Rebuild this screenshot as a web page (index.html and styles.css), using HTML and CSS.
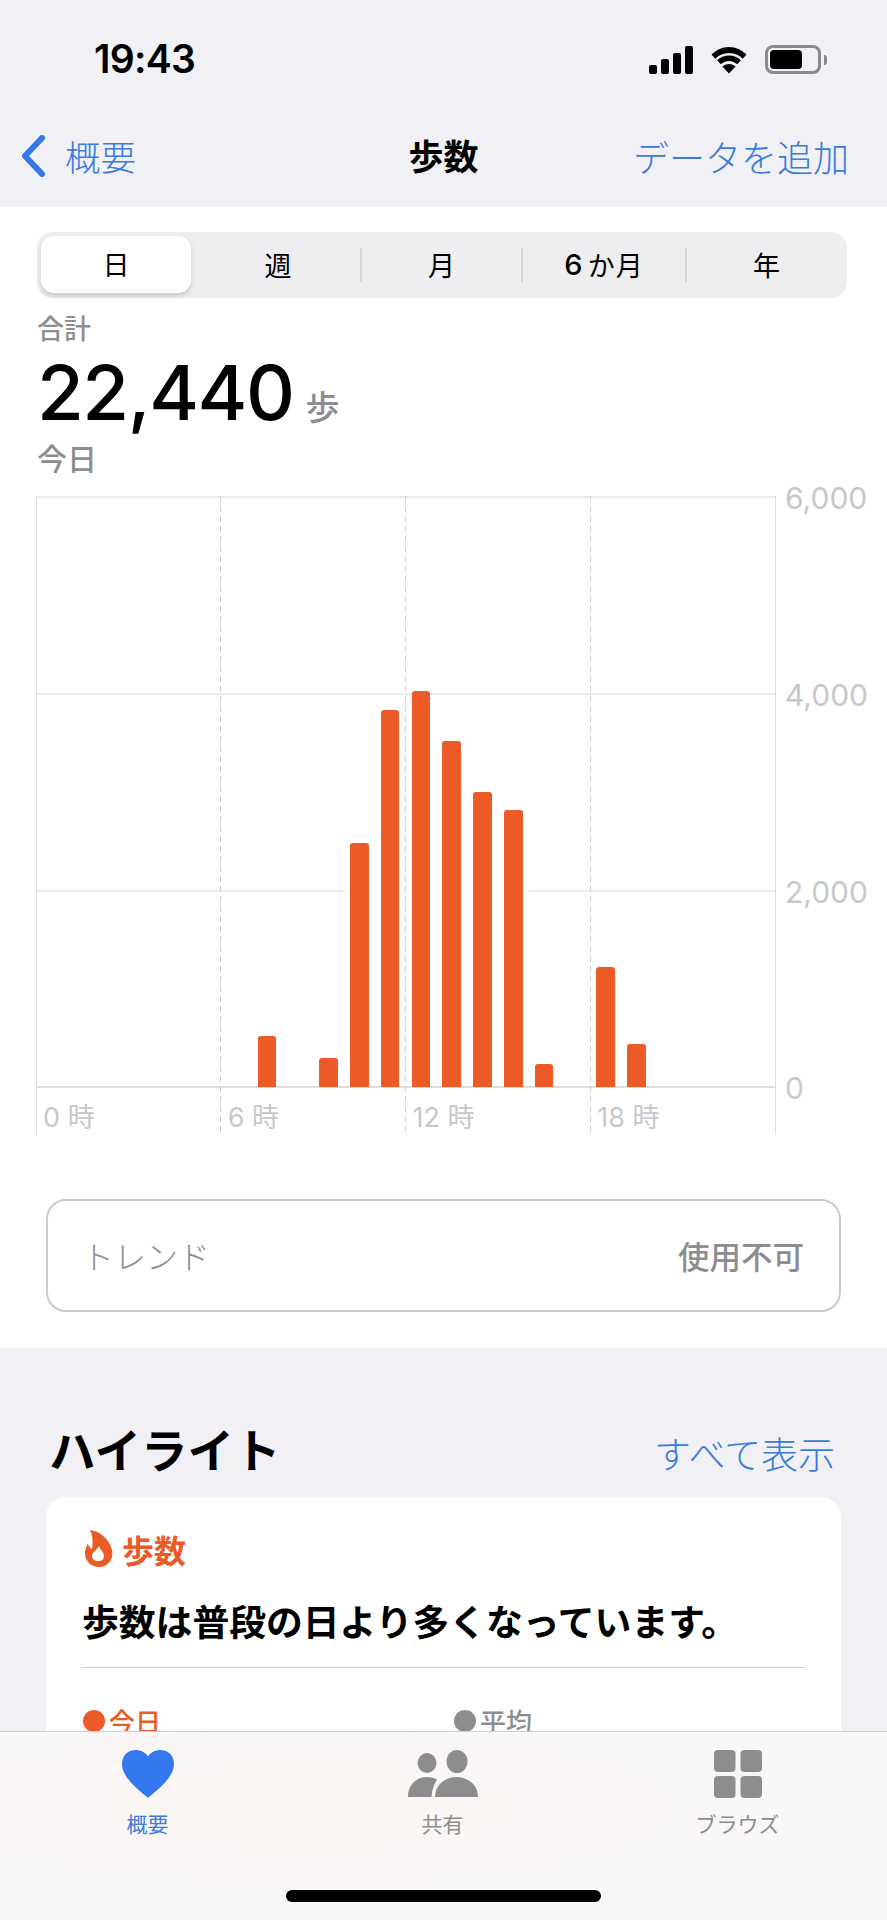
FILE: index.html
```html
<!DOCTYPE html>
<html lang="ja">
<head>
<meta charset="utf-8">
<title>歩数</title>
<link rel="stylesheet" href="styles.css">
</head>
<body>
<div class="phone">
  <header class="top">
    <div class="status">
      <span class="time">19:43</span>
      <div class="status-icons">
        <svg class="signal" viewBox="0 0 44 28"><rect x="0" y="19" width="8" height="9" rx="2"/><rect x="12" y="13" width="8" height="15" rx="2"/><rect x="24" y="7" width="8" height="21" rx="2"/><rect x="36" y="0" width="8" height="28" rx="2"/></svg>
        <svg class="wifi" viewBox="0 0 38 28"><path d="M19 7c5.400 0 10.200 2.200 13.700 5.700l3.800-4.100C32 4 25.800 1 19 1S6 4 1.500 8.600l3.800 4.100C8.800 9.200 13.600 7 19 7z"/><path d="M19 15c3.200 0 6 1.300 8.200 3.300l3.700-4C27.800 11.300 23.600 9.500 19 9.500S10.200 11.300 7.100 14.300l3.700 4c2.200-2 5-3.300 8.200-3.300z"/><path d="M19 27.500l6.600-7.100c-1.700-1.500-4-2.400-6.600-2.400s-4.900.9-6.600 2.400z"/></svg>
        <div class="battery"><div class="battery-body"><div class="battery-fill"></div></div><div class="battery-cap"></div></div>
      </div>
    </div>
    <nav class="navbar">
      <a class="back">
        <svg class="chevron" viewBox="0 0 26 42"><path d="M22 3L5 21l17 18" fill="none" stroke="#3478e8" stroke-width="6" stroke-linecap="round" stroke-linejoin="round"/></svg>
        <span>概要</span>
      </a>
      <h1 class="nav-title">歩数</h1>
      <a class="nav-action">データを追加</a>
    </nav>
  </header>

  <section class="detail">
    <div class="segments">
      <div class="seg seg-on">日</div>
      <div class="seg seg-week">週</div>
      <div class="seg seg-line">月</div>
      <div class="seg seg-line seg-half"><span class="seg-six">6</span>か月</div>
      <div class="seg seg-line seg-year">年</div>
    </div>
    <div class="summary">
      <div class="sum-label">合計</div>
      <div class="sum-value"><span class="sum-num">22,440</span><span class="sum-unit">歩</span></div>
      <div class="sum-date">今日</div>
    </div>
    <div class="chart">
      <div class="plot">
        <i class="hline hl-0"></i><i class="hline hl-1"></i><i class="hline hl-2"></i><i class="hline hl-3"></i>
        <i class="vline vl-0"></i><i class="vline vl-1 dash"></i><i class="vline vl-2 dash"></i><i class="vline vl-3 dash"></i><i class="vline vl-4"></i>
        <div class="bars">
          <div class="slot"></div><div class="slot"></div><div class="slot"></div><div class="slot"></div><div class="slot"></div><div class="slot"></div><div class="slot"></div>
          <div class="slot"><div class="bar" style="height:51px"></div></div>
          <div class="slot"></div>
          <div class="slot"><div class="bar" style="height:29px"></div></div>
          <div class="slot"><div class="bar" style="height:244px"></div></div>
          <div class="slot"><div class="bar" style="height:377px"></div></div>
          <div class="slot"><div class="bar" style="height:396px"></div></div>
          <div class="slot"><div class="bar" style="height:346px"></div></div>
          <div class="slot"><div class="bar" style="height:295px"></div></div>
          <div class="slot"><div class="bar" style="height:277px"></div></div>
          <div class="slot"><div class="bar" style="height:23px"></div></div>
          <div class="slot"></div>
          <div class="slot"><div class="bar" style="height:120px"></div></div>
          <div class="slot"><div class="bar" style="height:43px"></div></div>
          <div class="slot"></div><div class="slot"></div><div class="slot"></div><div class="slot"></div>
        </div>
        <div class="xlabels"><span>0 時</span><span>6 時</span><span>12 時</span><span>18 時</span></div>
      </div>
      <div class="ylabels"><span>6,000</span><span>4,000</span><span>2,000</span><span>0</span></div>
    </div>
    <div class="trend"><span class="trend-name">トレンド</span><span class="trend-value">使用不可</span></div>
  </section>

  <section class="highlights">
    <div class="hl-head"><h2>ハイライト</h2><a>すべて表示</a></div>
    <article class="card">
      <div class="card-tag">
        <svg class="flame" viewBox="0 0 28 37"><path fill-rule="evenodd" d="M5 0C14 1 24 8 27 20 29 29 23 37 14 37 6 37 0 31 0 23 0 19 2 15 3 14 4 17 5 18 7 19 8 13 8 6 5 0zM14 16C15 20 19 22 19 26 19 29 17 31 13 31 9 31 7 29 7 26 7 22 12 20 14 16z"/></svg>
        <span>歩数</span>
      </div>
      <p class="card-text">歩数は普段の日より多くなっています。</p>
      <div class="card-rule"></div>
      <div class="legend">
        <div class="leg leg-today"><i class="dot"></i>今日</div>
        <div class="leg leg-avg"><i class="dot"></i>平均</div>
      </div>
    </article>
  </section>

  <footer class="tabbar">
    <div class="tabs">
      <div class="tab tab-on">
        <svg class="tab-icon" width="52" height="48" viewBox="0 0 52 48"><path d="M26 48C24 45 0 30 0 14 0 5.500 6 0 13.500 0 19 0 23.500 2.500 26 6.500 28.500 2.500 33 0 38.500 0 46 0 52 5.500 52 14c0 16-24 31-26 34z"/></svg>
        <span>概要</span>
      </div>
      <div class="tab">
        <svg class="tab-icon" width="71" height="48" viewBox="0 0 71 48"><ellipse cx="20" cy="13" rx="9.500" ry="10"/><ellipse cx="50" cy="11.500" rx="10.500" ry="11.500"/><path d="M1 47C1 35 9 27 20 27 24 27 27 28 30 29.500 27 34 25 40 24.500 47z"/><path d="M28 47C28 35 38 27 49.500 27 61 27 71 35 71 47z"/></svg>
        <span>共有</span>
      </div>
      <div class="tab">
        <svg class="tab-icon" width="48" height="48" viewBox="0 0 48 48"><rect width="21.500" height="22" rx="4"/><rect x="26.500" width="21.500" height="22" rx="4"/><rect y="26" width="21.500" height="22" rx="4"/><rect x="26.500" y="26" width="21.500" height="22" rx="4"/></svg>
        <span>ブラウズ</span>
      </div>
    </div>
    <div class="home"></div>
  </footer>
</div>
</body>
</html>
```
FILE: styles.css
```css
* { box-sizing: border-box; }
html, body { margin: 0; padding: 0; }
body {
  width: 887px;
  height: 1920px;
  overflow: hidden;
  background: #f0f0f5;
  font-family: "Noto Sans CJK JP", "Inter", sans-serif;
  color: #000;
}
a { color: #3a7bdc; }
.phone { position: relative; width: 887px; height: 1920px; overflow: hidden; }

/* header */
.top { height: 207px; background: #f0f0f5; }
.status { height: 118px; padding: 45px 60px 0 94px; display: flex; justify-content: space-between; align-items: flex-start; }
.time { font: 600 39px/28px "Inter", sans-serif; letter-spacing: -0.7px; }
.status-icons { display: flex; align-items: center; gap: 17px; }
.signal { width: 44px; height: 28px; }
.wifi { width: 38px; height: 28px; }
.battery { display: flex; align-items: center; gap: 3px; }
.battery-body { width: 56px; height: 29px; border: 3px solid #8a8a8e; border-radius: 8px; padding: 2px; }
.battery-fill { width: 32px; height: 100%; background: #000; border-radius: 4px; }
.battery-cap { width: 3px; height: 10px; background: #8a8a8e; border-radius: 0 3px 3px 0; }

.navbar { display: flex; align-items: center; justify-content: space-between; padding: 0 38px 2px 20px; height: 78px; position: relative; }
.back { display: flex; align-items: center; gap: 19px; font-size: 35.500px; line-height: 44px; font-weight: 300; }
.chevron { width: 26px; height: 42px; }
.nav-title { position: absolute; left: 0; right: 0; top: 15px; margin: 0; text-align: center; font-size: 35px; line-height: 44px; font-weight: 700; }
.nav-action { font-size: 36px; line-height: 44px; font-weight: 300; }

/* detail */
.detail { background: #fff; height: 1141px; padding: 25px 40px 0 37px; }
.segments { display: flex; height: 66px; background: #eeeef0; border-radius: 16px; padding: 4px; }
.seg { flex: 0 0 161px; display: flex; align-items: center; justify-content: center; padding-bottom: 2px; font-size: 27px; font-weight: 400; position: relative; }
.seg-on { flex: 0 0 150px; height: 57px; background: #fff; border-radius: 13px; box-shadow: 0 3px 5px rgba(0,0,0,.16); }
.seg-week { flex-basis: 170px; padding-left: 4px; }
.seg-half { flex-basis: 164px; letter-spacing: 1px; }
.seg-six { font-family: "Inter", sans-serif; font-weight: 500; font-size: 29px; margin-right: 4px; }
.seg-year { flex: 1; padding-left: 4px; }
.seg-line::before { content: ""; position: absolute; left: -1px; top: 12px; bottom: 12px; width: 2px; background: #d6d6d9; }

.summary { padding-top: 13px; }
.sum-label { font-size: 27px; line-height: 34px; font-weight: 500; color: #8d8d90; }
.sum-value { display: flex; align-items: baseline; height: 84px; margin-top: 5px; }
.sum-num { font: 500 76px/84px "Inter", sans-serif; letter-spacing: -1.500px; }
.sum-unit { font-size: 34px; font-weight: 500; color: #8d8d90; margin-left: 12px; }
.sum-date { font-size: 30px; line-height: 40px; font-weight: 500; color: #8d8d90; margin-top: 3px; }

.chart { display: flex; margin: 19px 0 0 -1px; }
.plot { position: relative; width: 739px; height: 638px; }
.hline { position: absolute; left: 0; right: 0; height: 2px; background: #ebebed; }
.hl-0 { top: 0; }
.hl-1 { top: 197px; }
.hl-2 { top: 394px; background: linear-gradient(to right, #ebebed 0 309px, transparent 309px 493px, #ebebed 493px); }
.hl-3 { top: 590px; background: #dedee0; }
.vline { position: absolute; top: 0; bottom: 0; width: 1px; background: #dcdcde; }
.vl-0 { left: 0; }
.vl-1 { left: 184px; }
.vl-2 { left: 369px; }
.vl-3 { left: 554px; }
.vl-4 { left: 739px; }
.dash { background: repeating-linear-gradient(to bottom, #d0d0d4 0 6px, transparent 6px 10px); }
.bars { position: absolute; left: 0; top: 0; width: 739px; height: 591px; display: grid; grid-template-columns: repeat(24, 1fr); }
.slot { display: flex; align-items: flex-end; justify-content: center; }
.bar { width: 18.500px; background: #ec5a27; border-radius: 3px 3px 0 0; position: relative; }
.xlabels { position: absolute; left: 0; top: 591px; width: 739px; display: grid; grid-template-columns: repeat(4, 1fr); padding-top: 14px; }
.xlabels span { padding-left: 7px; font-family: "Inter", "Noto Sans CJK JP", sans-serif; font-size: 27px; line-height: 34px; color: #c7c7cc; }
.ylabels { position: relative; flex: 1; height: 591px; }
.ylabels span { position: absolute; left: 10px; font: 400 30px/30px "Inter", sans-serif; color: #c7c7cc; transform: translateY(-50%); }
.ylabels span:nth-child(1) { top: 2px; }
.ylabels span:nth-child(2) { top: 199px; }
.ylabels span:nth-child(3) { top: 396px; }
.ylabels span:nth-child(4) { top: 592px; }

.trend { margin: 65px 0 0 9px; width: 795px; height: 113px; border: 2px solid #cbcbce; border-radius: 20px; display: flex; justify-content: space-between; align-items: center; padding: 0 35px 2px 34px; font-size: 32px; color: #8d8d90; }
.trend-name { font-weight: 300; }
.trend-value { font-size: 31.500px; font-weight: 500; }

/* highlights */
.highlights { padding: 0 46px; }
.hl-head { height: 149px; display: flex; justify-content: space-between; align-items: flex-start; padding: 70px 6px 0 3px; }
.hl-head h2 { margin: 0; font-size: 46.500px; line-height: 60px; font-weight: 700; }
.hl-head a { font-size: 37px; line-height: 60px; font-weight: 300; padding-top: 5px; }
.card { background: #fff; border-radius: 20px; height: 400px; padding: 33px 36px 0; }
.card-tag { display: flex; align-items: center; gap: 9px; height: 37px; font-size: 32px; font-weight: 700; color: #ec5a27; }
.flame { width: 28px; height: 37px; flex: none; margin-left: 3px; fill: #ec5a27; }
.card-text { margin: 29px 0 0; font-size: 36.800px; line-height: 48px; font-weight: 700; }
.card-rule { height: 1px; background: #d0d0d3; margin-top: 23px; }
.legend { display: grid; grid-template-columns: 371px 1fr; margin-top: 35px; padding-left: 1px; }
.leg { display: flex; align-items: center; gap: 4px; font-size: 26px; line-height: 36px; font-weight: 500; }
.dot { width: 22px; height: 22px; border-radius: 50%; background: currentColor; }
.leg-today { color: #ec5a27; }
.leg-avg { color: #8d8d90; }

/* tab bar */
.tabbar { position: absolute; left: 0; right: 0; top: 1731px; bottom: 0; background: radial-gradient(ellipse at 35% 40%, #faf6f4, #f8f7f7 75%); border-top: 1px solid #cfcfd1; }
.tabs { display: grid; grid-template-columns: repeat(3, 1fr); padding: 18px 2px 0 0; }
.tab { display: flex; flex-direction: column; align-items: center; gap: 10px; font-size: 21px; line-height: 30px; color: #8d8d90; fill: #8d8d90; }
.tab-on { color: #3a7bdc; fill: #3478f0; }
.home { position: absolute; left: 286px; top: 158px; width: 315px; height: 12px; background: #000; border-radius: 6px; }
```
